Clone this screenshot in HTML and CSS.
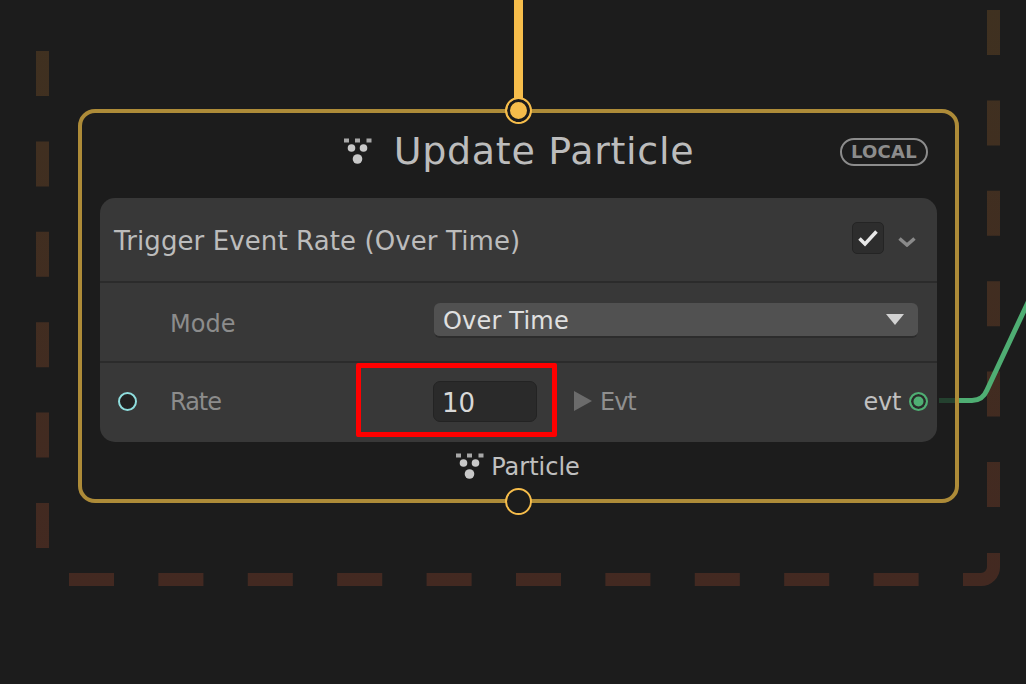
FILE: index.html
```html
<!DOCTYPE html>
<html lang="en">
<head>
    <meta charset="UTF-8">
    <title>Update Particle</title>
    <link rel="stylesheet" href="styles.css">
</head>
<body>
    <div class="canvas">
        <!-- Group outline and wires sit behind the node -->
        <svg class="wires" width="1026" height="684" viewBox="0 0 1026 684">
            <defs>
                <linearGradient id="groupFade" gradientUnits="userSpaceOnUse" x1="0" y1="0" x2="0" y2="586">
                    <stop offset="0" stop-color="#3f3120"/>
                    <stop offset="1" stop-color="#432921"/>
                </linearGradient>
                <filter id="soft" x="-20%" y="-20%" width="140%" height="140%">
                    <feGaussianBlur stdDeviation="0.7"/>
                </filter>
                <symbol id="particleIcon" viewBox="0 0 30 30">
                    <g filter="url(#soft)">
                        <rect class="dot-far" x="1" y="1.500" width="5" height="4"/>
                        <rect class="dot-far" x="12" y="1.500" width="5" height="4"/>
                        <rect class="dot-far" x="23.500" y="1.500" width="5" height="4"/>
                        <circle class="dot-near" cx="8.500" cy="11" r="3.800"/>
                        <circle class="dot-near" cx="20.500" cy="11" r="3.800"/>
                        <circle class="dot-near" cx="14.500" cy="22" r="4.800"/>
                    </g>
                </symbol>
            </defs>
            <g class="group-line" stroke="url(#groupFade)">
                <path d="M42.500 51V548" stroke-dasharray="45 45.400"/>
                <path d="M993.500 10V507" stroke-dasharray="45 45.400"/>
                <path d="M69 579.500H919" stroke-dasharray="45 44.400"/>
                <path d="M963 579.500H981a12.500 12.500 0 0 0 12.500 -12.500V553"/>
            </g>
            <path class="wire-flow" d="M518.500 0V110"/>
            <path class="wire-out" d="M958 400.500H972C980 400.500 984 397 987 390L1030 298"/>
        </svg>

        <div class="node">
            <div class="node-title">
                <svg class="icon-title" width="30" height="30"><use href="#particleIcon"/></svg>
                <span>Update Particle</span>
            </div>
            <span class="badge">LOCAL</span>

            <div class="block">
                <div class="row row-head">
                    <span class="block-name">Trigger Event Rate (Over Time)</span>
                    <span class="checkbox">
                        <svg width="22" height="18" viewBox="0 0 22 18"><path d="M2.500 9.500L8 15L19.500 2.500"/></svg>
                    </span>
                    <svg class="chevron" width="18" height="10" viewBox="0 0 18 10"><path d="M1.500 1.500L9 8L16.500 1.500"/></svg>
                </div>
                <div class="row row-mode">
                    <span class="label label-mode">Mode</span>
                    <div class="select">
                        <span class="select-text">Over Time</span>
                        <i class="select-arrow"></i>
                    </div>
                </div>
                <div class="row row-rate">
                    <i class="port-in"></i>
                    <span class="label label-rate">Rate</span>
                    <div class="field">10</div>
                    <i class="evt-arrow"></i>
                    <span class="evt-label">Evt</span>
                    <span class="evt-out">evt</span>
                    <i class="port-out"></i>
                </div>
            </div>

            <div class="node-footer">
                <svg width="30" height="30"><use href="#particleIcon"/></svg>
                <span>Particle</span>
            </div>

            <i class="flow flow-top"></i>
            <i class="flow flow-bottom"></i>
            <i class="wire-stub"></i>
        </div>

        <!-- Red annotation box drawn on top of the screenshot -->
        <div class="highlight"></div>
    </div>
</body>
</html>
```
FILE: styles.css
```css
/* Basic reset and font settings */
* {
    box-sizing: border-box;
    margin: 0;
    padding: 0;
    font-family: "DejaVu Sans", "Noto Sans", sans-serif;
}
body {
    background-color: #1c1c1c;
    overflow: hidden;
}
.canvas {
    position: relative;
    width: 1026px;
    height: 684px;
    overflow: hidden;
}
/* Wires and the dashed group outline */
.wires {
    position: absolute;
    left: 0;
    top: 0;
}
.group-line path {
    fill: none;
    stroke-width: 13;
}
.wire-flow {
    fill: none;
    stroke: #f6bd4b;
    stroke-width: 9;
}
.wire-out {
    fill: none;
    stroke: #4fae73;
    stroke-width: 5;
}
/* Particle icon dots */
.dot-far {
    fill: #a8a8a8;
}
.dot-near {
    fill: #c8c8c8;
}
/* Node box */
.node {
    position: absolute;
    left: 78px;
    top: 109px;
    width: 881px;
    height: 394px;
    display: flex;
    flex-direction: column;
    padding: 0 18px;
    background-color: #1c1c1c;
    border: 4px solid #ad8b38;
    border-radius: 17px;
}
.node-title {
    height: 85px;
    flex-shrink: 0;
    display: flex;
    align-items: center;
    justify-content: center;
    gap: 21px;
    padding-bottom: 10px;
    font-size: 38px;
    letter-spacing: 0.7px;
    color: #bcbcbc;
}
.icon-title {
    margin-top: 3px;
}
.badge {
    position: absolute;
    right: 27px;
    top: 25px;
    width: 88px;
    height: 28px;
    border: 2px solid #8c8c8c;
    border-radius: 14px;
    font-size: 18px;
    font-weight: bold;
    letter-spacing: 0.3px;
    line-height: 24px;
    text-align: center;
    color: #8c8c8c;
}
/* Block with its rows */
.block {
    height: 244px;
    flex-shrink: 0;
    background-color: #383838;
    border-radius: 15px;
}
.row {
    display: flex;
    align-items: center;
}
.row-head {
    height: 85px;
    padding: 0 21px 0 14px;
    border-bottom: 2px solid #2b2b2b;
}
.block-name {
    flex: 1;
    padding-top: 2px;
    font-size: 26px;
    letter-spacing: 0.1px;
    color: #bcbcbc;
}
.checkbox {
    width: 32px;
    height: 32px;
    margin-bottom: 4px;
    display: flex;
    align-items: center;
    justify-content: center;
    background-color: #2d2d2d;
    border: 1px solid #242424;
    border-radius: 5px;
}
.checkbox path {
    fill: none;
    stroke: #e8e8e8;
    stroke-width: 3.5;
}
.chevron {
    margin: 4px 0 0 14px;
}
.chevron path {
    fill: none;
    stroke: #8a8a8a;
    stroke-width: 3.5;
}
.row-mode {
    height: 80px;
    padding: 0 19px 0 70px;
    border-bottom: 2px solid #2b2b2b;
}
.label {
    font-size: 24px;
    color: #8c8c8c;
}
.label-mode {
    width: 264px;
    padding-top: 3px;
}
.select {
    flex: 1;
    height: 35px;
    margin-bottom: 4px;
    display: flex;
    align-items: center;
    justify-content: space-between;
    padding: 0 14px 0 9px;
    background-color: #515151;
    border-bottom: 2px solid #2c2c2c;
    border-radius: 6px;
    font-size: 24px;
    letter-spacing: 0.2px;
    color: #e0e0e0;
}
.select-text {
    padding-top: 3px;
}
.select-arrow {
    border-left: 9px solid transparent;
    border-right: 9px solid transparent;
    border-top: 11px solid #d2d2d2;
}
.row-rate {
    height: 79px;
    padding: 0 9px 3px 18px;
}
.port-in {
    width: 19px;
    height: 19px;
    margin-right: 33px;
    background-color: #222;
    border: 2px solid #8fdede;
    border-radius: 50%;
}
.label-rate {
    width: 263px;
    padding-top: 2px;
    letter-spacing: -1px;
}
.field {
    width: 104px;
    height: 41px;
    padding-left: 8px;
    background-color: #2a2a2a;
    border: 1px solid #232323;
    border-radius: 7px;
    font-size: 26px;
    line-height: 42px;
    color: #d8d8d8;
}
.evt-arrow {
    margin-left: 37px;
    border-top: 10px solid transparent;
    border-bottom: 10px solid transparent;
    border-left: 18px solid #6b6b6b;
}
.evt-label {
    flex: 1;
    margin-left: 8px;
    padding-top: 2px;
    font-size: 24px;
    letter-spacing: -1px;
    color: #8f8f8f;
}
.evt-out {
    padding-top: 2px;
    font-size: 24px;
    letter-spacing: -0.3px;
    color: #c0c0c0;
}
.port-out {
    width: 19px;
    height: 19px;
    margin-left: 8px;
    background-color: #4fae73;
    border: 2px solid #4fae73;
    border-radius: 50%;
    box-shadow: inset 0 0 0 2.500px #2a2a2a;
}
.node-footer {
    flex: 1;
    display: flex;
    align-items: center;
    justify-content: center;
    gap: 6px;
    padding: 0 2px 8px 0;
    font-size: 24px;
    color: #c0c0c0;
}
/* Flow ports on the node edge */
.flow {
    position: absolute;
    left: 423px;
    width: 27px;
    height: 27px;
    border: 2px solid #f6bd4b;
    border-radius: 50%;
    background-color: #1c1c1c;
}
.flow-top {
    top: -16px;
    background-color: #f6bd4b;
    box-shadow: inset 0 0 0 3px #1c1c1c;
}
.flow-bottom {
    top: 375px;
}
/* Faded start of the output wire, over the node edge */
.wire-stub {
    position: absolute;
    left: 857px;
    top: 285px;
    width: 16px;
    height: 5px;
    background-color: #24412f;
}
.highlight {
    position: absolute;
    left: 356px;
    top: 363px;
    width: 201px;
    height: 74px;
    border: 5px solid #ff0000;
    border-radius: 2px;
}
```
